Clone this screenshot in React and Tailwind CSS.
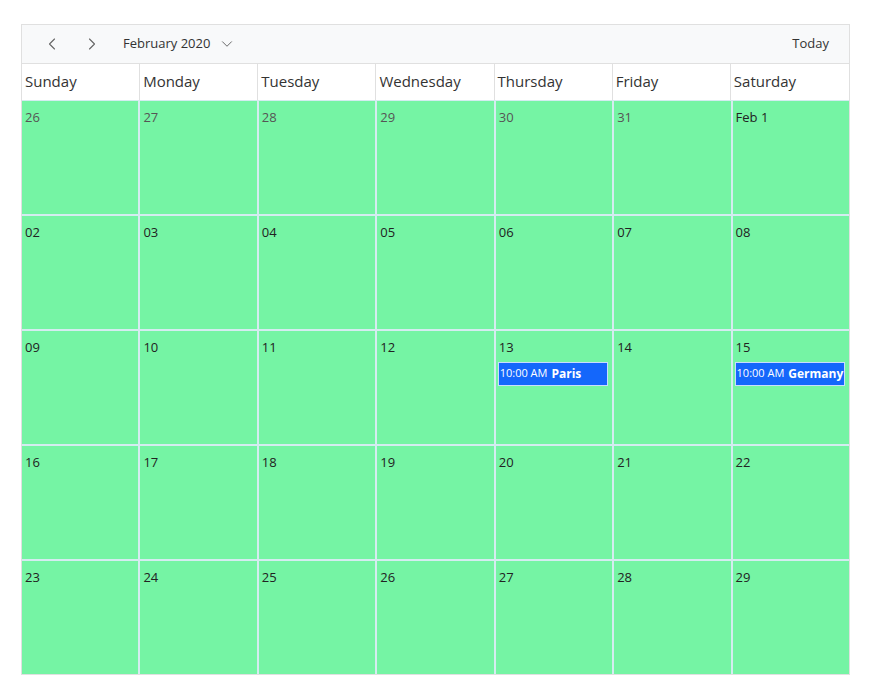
import { ChevronLeft, ChevronRight, ChevronDown } from "lucide-react";

const days = ["Sunday", "Monday", "Tuesday", "Wednesday", "Thursday", "Friday", "Saturday"];

const weeks = [
  ["26", "27", "28", "29", "30", "31", "Feb 1"],
  ["02", "03", "04", "05", "06", "07", "08"],
  ["09", "10", "11", "12", "13", "14", "15"],
  ["16", "17", "18", "19", "20", "21", "22"],
  ["23", "24", "25", "26", "27", "28", "29"],
];

const events = { "2-4": "Paris", "2-6": "Germany" };

export default function App() {
  return (
    <div className="bg-white w-[878px] h-[696px] pt-6 pl-[21px]" style={{ fontFamily: "'Open Sans', 'Noto Sans', sans-serif" }}>
      <div className="w-[829px] border border-[#e0e0e0]">
        {/* toolbar */}
        <div className="h-[39px] bg-[#f8f9fa] border-b border-[#e0e0e0] flex items-center pl-5 pr-5 text-[13px] text-[#333]">
          <ChevronLeft size={20} strokeWidth={1.3} className="text-[#666]" />
          <ChevronRight size={20} strokeWidth={1.3} className="text-[#666] ml-5" />
          <span className="ml-[21px]">February 2020</span>
          <ChevronDown size={18} strokeWidth={1.3} className="text-[#666] ml-2" />
          <span className="ml-auto">Today</span>
        </div>
        {/* header */}
        <div className="grid grid-cols-7 h-[36px] bg-white">
          {days.map((d, i) => (
            <div key={d} className={`pl-[3px] pt-[6px] text-[15px] text-[#333] ${i < 6 ? "border-r border-[#e0e0e0]" : ""}`}>
              {d}
            </div>
          ))}
        </div>
        {/* body */}
        <div className="grid grid-cols-7 gap-[2px] bg-[#d4ecf0] pt-[1px]">
          {weeks.map((w, r) =>
            w.map((d, c) => (
              <div key={`${r}-${c}`} className="bg-[#75f4a4] h-[113px] px-[2px] pt-[7px] text-[13px]">
                <div className={`pl-[1px] ${r === 0 && c < 6 ? "text-[#555]" : "text-[#222]"}`}>{d}</div>
                {events[`${r}-${c}`] && (
                  <div className="mt-[4px] mr-[2px] h-[24px] bg-[#1467fb] border border-[#c9dcff] text-white text-[11px] flex items-center pl-[1px] whitespace-nowrap">
                    10:00 AM <span className="font-bold text-[12px] ml-1">{events[`${r}-${c}`]}</span>
                  </div>
                )}
              </div>
            ))
          )}
        </div>
      </div>
    </div>
  );
}
